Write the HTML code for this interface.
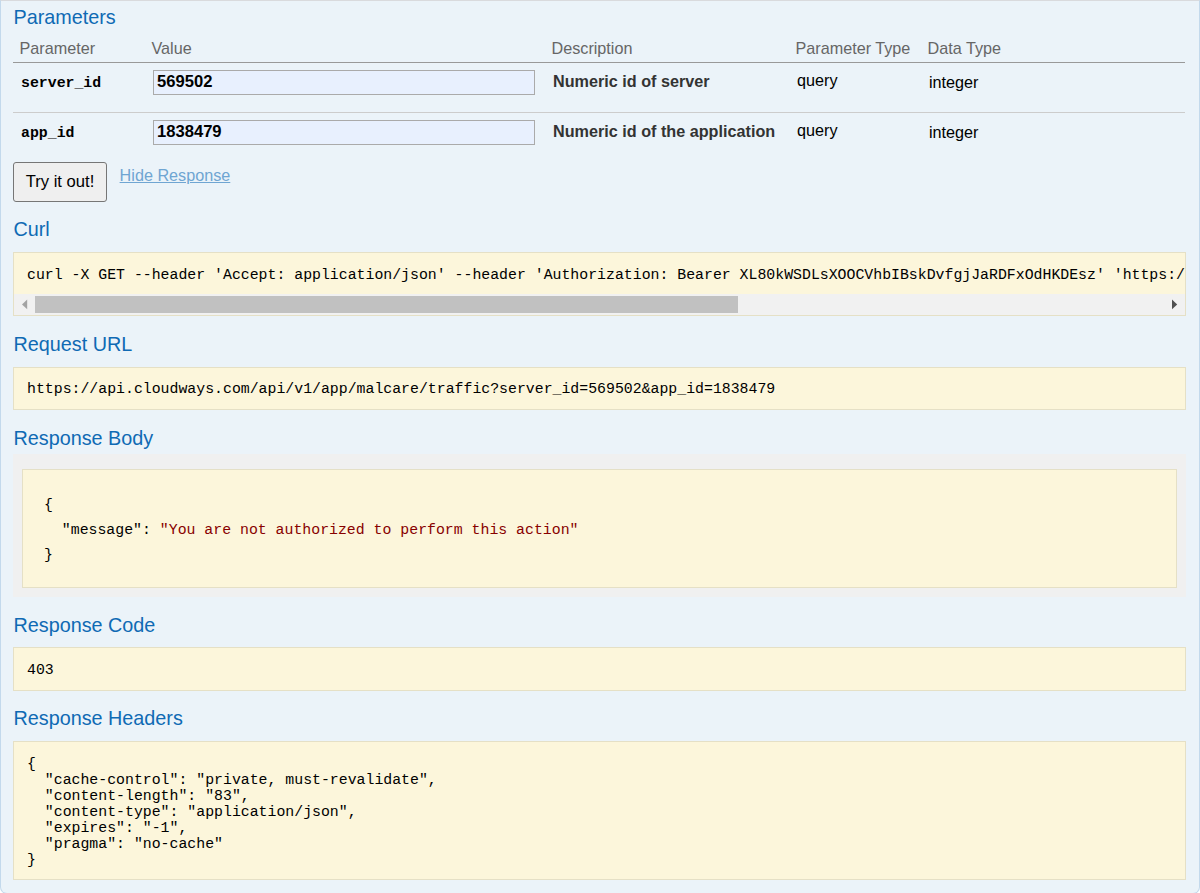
<!DOCTYPE html>
<html lang="en">
<head>
<meta charset="utf-8">
<title>Swagger UI</title>
<style>
html,body{margin:0;padding:0;background:#fff;}
body{width:1200px;height:893px;overflow:hidden;position:relative;font-family:"Liberation Sans",Arial,sans-serif;font-size:16.2px;color:#000;}
.content{position:absolute;left:0;top:0;width:1198px;height:892px;background:#ebf3f9;border:1px solid #c3d9ec;border-top:1px solid #d9dadd;border-bottom-left-radius:7px;border-bottom-right-radius:7px;}
h4{position:absolute;left:12.5px;margin:0;font-weight:normal;font-size:19.8px;line-height:24px;color:#0f6ab4;white-space:nowrap;}
table.params{position:absolute;left:12px;top:35px;width:1172px;border-collapse:collapse;border-spacing:0;table-layout:fixed;}
table.params th{text-align:left;font-weight:normal;font-size:16.2px;line-height:18px;color:#666;padding:3px 0 5px 6.5px;border-bottom:1px solid #999;height:18px;white-space:nowrap;}
table.params td{padding:0 0 0 8px;vertical-align:top;font-size:16.2px;white-space:nowrap;}
table.params tr.r1 td{height:49px;border-bottom:1px solid #ccc;}
table.params tr.r2 td{height:49px;}
table.params td.code{font-family:"Liberation Mono","DejaVu Sans Mono",monospace;font-weight:bold;font-size:14.855px;}
td.code label{display:block;margin:10px 0 0 0;line-height:20px;}
td.desc{font-weight:bold;color:#333;}
td .t{display:block;margin-top:8px;line-height:20px;}
input.parameter{display:block;box-sizing:border-box;width:382px;height:25px;margin:7px 0 0 0;padding:0 0 2px 3px;border:1px solid #aaa;background:#e8f0fe;font-family:"Liberation Sans",Arial,sans-serif;font-weight:bold;font-size:16.6px;color:#000;border-radius:0;outline:none;}
button.submit{position:absolute;left:12px;top:161px;width:94px;height:40px;box-sizing:border-box;border:1px solid #767676;border-radius:3px;background:#efefef;font-family:"Liberation Sans",Arial,sans-serif;font-size:16.6px;color:#000;padding:0;}
a.hide{position:absolute;left:118.6px;top:164px;font-size:16.2px;line-height:20px;color:#6fa5d2;text-decoration:underline;}
pre{margin:0;font-family:"Liberation Mono","DejaVu Sans Mono",monospace;font-size:14.855px;color:#000;white-space:pre;}
.box{position:absolute;left:12px;width:1171px;background:#fcf6db;border:1px solid #e5e0c6;overflow:hidden;}
.box pre{position:absolute;left:13px;}
.wrap{position:absolute;left:12px;width:1173px;background:#f0f0f0;}
.str{color:#880000;}
.sb{position:absolute;left:0;top:41px;width:1171px;height:21px;background:#f1f1f1;}
.sb .thumb{position:absolute;left:21px;top:2px;width:703px;height:17px;background:#c1c1c1;}
.sb svg{position:absolute;top:0;}
</style>
</head>
<body>
<div class="content">
  <h4 style="top:4px">Parameters</h4>
  <table class="params">
    <colgroup><col style="width:132px"><col style="width:400px"><col style="width:244px"><col style="width:132px"><col></colgroup>
    <thead><tr><th>Parameter</th><th>Value</th><th>Description</th><th>Parameter Type</th><th>Data Type</th></tr></thead>
    <tbody>
      <tr class="r1"><td class="code"><label>server_id</label></td><td><input class="parameter" type="text" value="569502"></td><td class="desc"><span class="t">Numeric id of server</span></td><td><span class="t" style="margin-top:7px">query</span></td><td><span class="t" style="margin-top:9px">integer</span></td></tr>
      <tr class="r2"><td class="code"><label>app_id</label></td><td><input class="parameter" type="text" value="1838479"></td><td class="desc"><span class="t">Numeric id of the application</span></td><td><span class="t" style="margin-top:7px">query</span></td><td><span class="t" style="margin-top:9px">integer</span></td></tr>
    </tbody>
  </table>
  <button class="submit" type="button">Try it out!</button>
  <a class="hide">Hide Response</a>

  <h4 style="top:216px">Curl</h4>
  <div class="box" style="top:251px;height:62px;">
    <pre style="top:12px;line-height:20px;">curl -X GET --header 'Accept: application/json' --header 'Authorization: Bearer XL80kWSDLsXOOCVhbIBskDvfgjJaRDFxOdHKDEsz' 'https://api.cloudways.com/api/v1/app/malcare/traffic?server_id=569502&amp;app_id=1838479'</pre>
    <div class="sb"><svg style="left:0" width="21" height="21" viewBox="0 0 21 21"><path d="M13.2 5.6 L8 10.45 L13.2 15.3 Z" fill="#a3a3a3"/></svg><div class="thumb"></div><svg style="right:0" width="21" height="21" viewBox="0 0 21 21"><path d="M8 5.6 L13.2 10.45 L8 15.3 Z" fill="#505050"/></svg></div>
  </div>

  <h4 style="top:331px">Request URL</h4>
  <div class="box" style="top:366px;height:41px;">
    <pre style="top:11px;line-height:20px;">https://api.cloudways.com/api/v1/app/malcare/traffic?server_id=569502&amp;app_id=1838479</pre>
  </div>

  <h4 style="top:425px">Response Body</h4>
  <div class="wrap" style="top:453px;height:143px;"></div>
  <div class="box" style="left:21px;width:1153px;top:468px;height:117px;">
    <pre style="left:21px;top:23px;line-height:25px;">{
  "message": <span class="str">"You are not authorized to perform this action"</span>
}</pre>
  </div>

  <h4 style="top:612px">Response Code</h4>
  <div class="box" style="top:646px;height:42px;">
    <pre style="top:12px;line-height:20px;">403</pre>
  </div>

  <h4 style="top:705px">Response Headers</h4>
  <div class="box" style="top:740px;height:137px;">
    <pre style="top:14px;line-height:16px;">{
  "cache-control": "private, must-revalidate",
  "content-length": "83",
  "content-type": "application/json",
  "expires": "-1",
  "pragma": "no-cache"
}</pre>
  </div>
</div>
</body>
</html>
